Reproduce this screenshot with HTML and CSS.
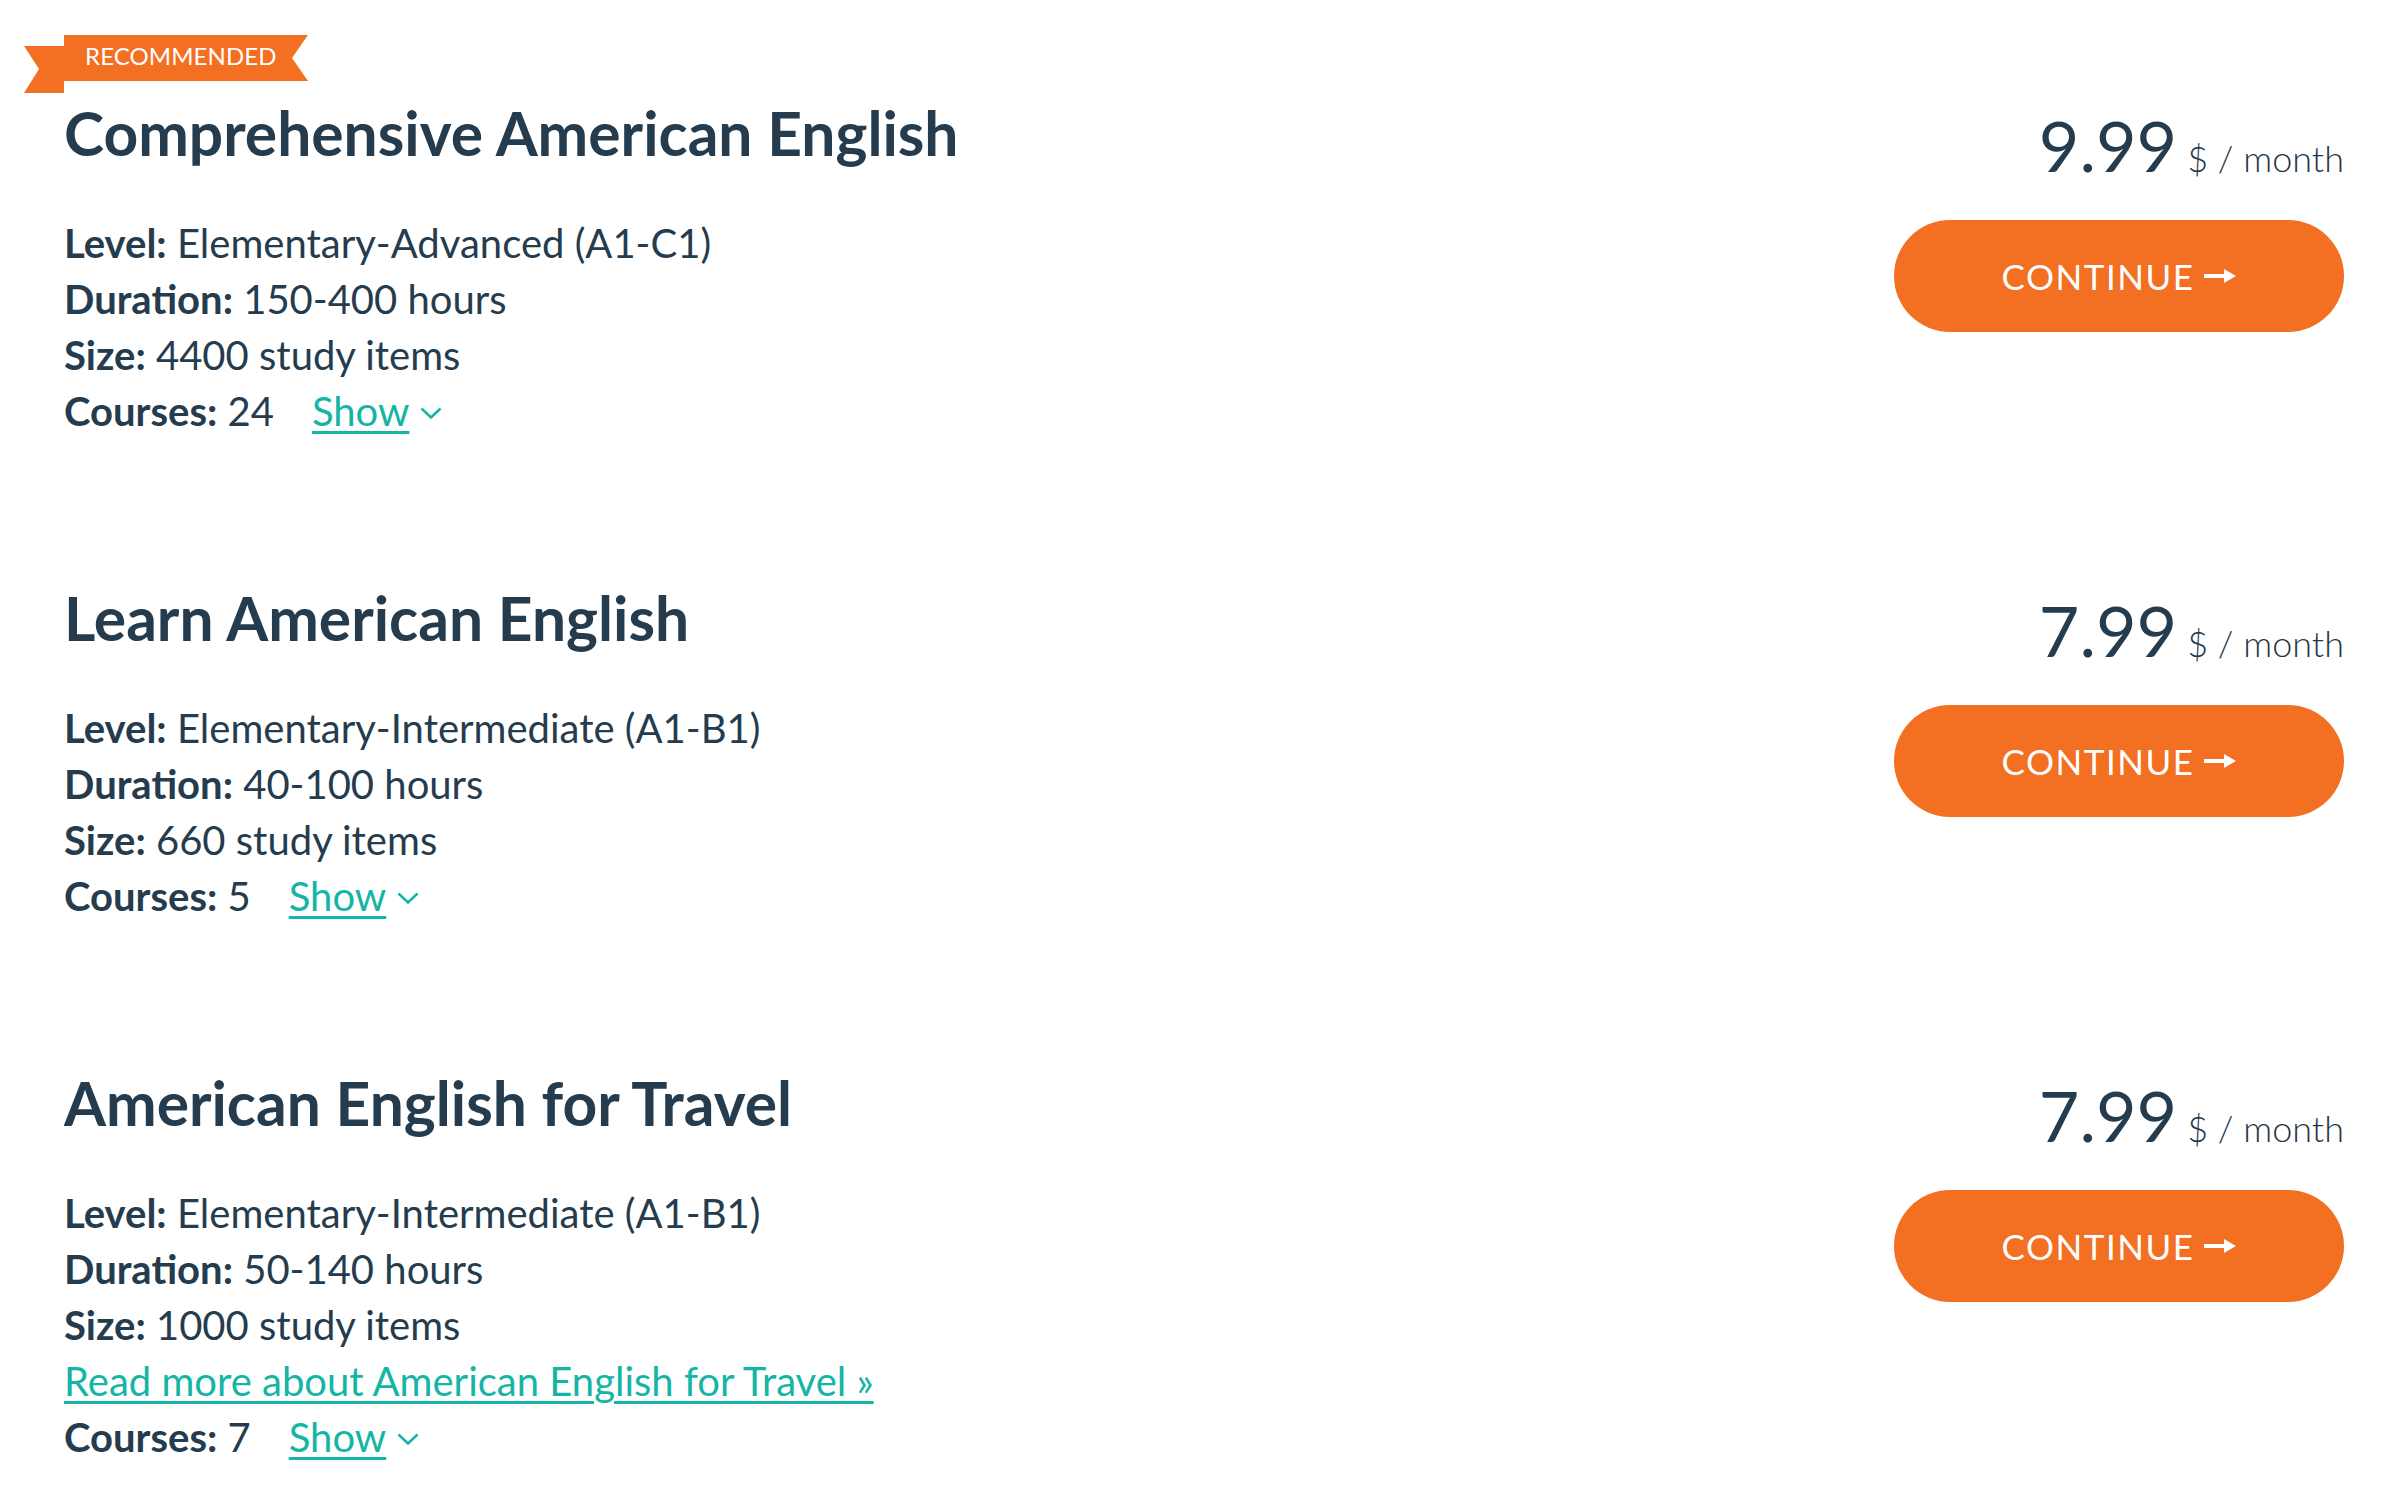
FILE: index.html
```html
<!DOCTYPE html>
<html lang="en">
<head>
<meta charset="utf-8">
<title>Plans</title>
<link rel="stylesheet" href="styles.css">
</head>
<body>
<main class="plans">
  <section class="plan">
    <div class="plan-info">
      <div class="badge">
        <svg class="badge-shape" width="284" height="58" viewBox="0 0 284 58" aria-hidden="true">
          <polygon points="0,11 40,11 40,58 0,58 15,34" fill="#f36f21"/>
          <polygon points="40,0 284,0 268,23 284,46 40,46" fill="#f36f21"/>
        </svg>
        <span class="badge-text">RECOMMENDED</span>
      </div>
      <h2 class="plan-title">Comprehensive American English</h2>
      <ul class="plan-details">
        <li><b>Level:</b> Elementary-Advanced (A1-C1)</li>
        <li><b>Duration:</b> 150-400 hours</li>
        <li><b>Size:</b> 4400 study items</li>
        <li><b>Courses:</b> 24<a class="show" href="#">Show<svg class="chev" width="22" height="12" viewBox="0 0 22 12"><polyline points="1.5,1.5 11,10.5 20.5,1.5"/></svg></a></li>
      </ul>
    </div>
    <div class="plan-buy">
      <div class="price"><span class="amount">9.99</span><span class="unit">$ / month</span></div>
      <a class="btn" href="#">CONTINUE<svg class="arrow" width="32" height="16" viewBox="0 0 32 16"><line x1="0" y1="8" x2="22" y2="8"/><polygon points="20,1 32,8 20,15"/></svg></a>
    </div>
  </section>

  <section class="plan">
    <div class="plan-info">
      <h2 class="plan-title">Learn American English</h2>
      <ul class="plan-details">
        <li><b>Level:</b> Elementary-Intermediate (A1-B1)</li>
        <li><b>Duration:</b> 40-100 hours</li>
        <li><b>Size:</b> 660 study items</li>
        <li><b>Courses:</b> 5<a class="show" href="#">Show<svg class="chev" width="22" height="12" viewBox="0 0 22 12"><polyline points="1.5,1.5 11,10.5 20.5,1.5"/></svg></a></li>
      </ul>
    </div>
    <div class="plan-buy">
      <div class="price"><span class="amount">7.99</span><span class="unit">$ / month</span></div>
      <a class="btn" href="#">CONTINUE<svg class="arrow" width="32" height="16" viewBox="0 0 32 16"><line x1="0" y1="8" x2="22" y2="8"/><polygon points="20,1 32,8 20,15"/></svg></a>
    </div>
  </section>

  <section class="plan">
    <div class="plan-info">
      <h2 class="plan-title">American English for Travel</h2>
      <ul class="plan-details">
        <li><b>Level:</b> Elementary-Intermediate (A1-B1)</li>
        <li><b>Duration:</b> 50-140 hours</li>
        <li><b>Size:</b> 1000 study items</li>
        <li><a class="more" href="#">Read more about American English for Travel »</a></li>
        <li><b>Courses:</b> 7<a class="show" href="#">Show<svg class="chev" width="22" height="12" viewBox="0 0 22 12"><polyline points="1.5,1.5 11,10.5 20.5,1.5"/></svg></a></li>
      </ul>
    </div>
    <div class="plan-buy">
      <div class="price"><span class="amount">7.99</span><span class="unit">$ / month</span></div>
      <a class="btn" href="#">CONTINUE<svg class="arrow" width="32" height="16" viewBox="0 0 32 16"><line x1="0" y1="8" x2="22" y2="8"/><polygon points="20,1 32,8 20,15"/></svg></a>
    </div>
  </section>
</main>
</body>
</html>
```
FILE: styles.css
```css
* { box-sizing: border-box; }

html, body {
  margin: 0;
  padding: 0;
  background: #ffffff;
}

body {
  font-family: Lato, "Open Sans", "Liberation Sans", sans-serif;
  color: #253c4e;
}

.plans {
  display: flex;
  flex-direction: column;
  gap: 144px;
  padding: 98px 44px 0 64px;
}

.plan {
  display: flex;
  justify-content: space-between;
  align-items: flex-start;
}

.plan-info {
  position: relative;
}

.badge {
  position: absolute;
  left: -40px;
  top: -63px;
  width: 284px;
  height: 58px;
  padding-left: 61px;
}

.badge-shape {
  position: absolute;
  left: 0;
  top: 0;
}

.badge-text {
  position: relative;
  display: block;
  font-size: 24px;
  line-height: 42px;
  color: #ffffff;
  letter-spacing: 0.1px;
}

.plan-title {
  margin: 0;
  font-size: 60.5px;
  line-height: 70px;
  font-weight: 700;
  color: #253c4e;
}

.plan-details {
  list-style: none;
  margin: 47px 0 0;
  padding: 0;
  font-size: 40px;
  line-height: 56px;
}

.plan-details li {
  display: flex;
  align-items: baseline;
  white-space: pre;
}

.plan-details b {
  font-weight: 700;
}

.show {
  display: inline-flex;
  align-items: center;
  margin-left: 38px;
  color: #15b5a5;
  text-decoration: underline;
  text-decoration-thickness: 3px;
  text-underline-offset: 5px;
}

.chev {
  margin-left: 11px;
  fill: none;
  stroke: #15b5a5;
  stroke-width: 2.5;
  position: relative;
  top: 2px;
}

.more {
  color: #15b5a5;
  text-decoration: underline;
  text-decoration-thickness: 3px;
  text-underline-offset: 5px;
}

.plan-buy {
  display: flex;
  flex-direction: column;
  align-items: flex-end;
  padding-top: 12px;
}

.price {
  display: flex;
  align-items: baseline;
  gap: 10px;
  line-height: 70px;
}

.amount {
  font-size: 70px;
  font-weight: 400;
  color: #253c4e;
}

.unit {
  font-size: 36px;
  font-weight: 300;
  color: #1f3646;
}

.btn {
  margin-top: 27px;
  width: 450px;
  height: 112px;
  border-radius: 56px;
  background: #f36f21;
  color: #ffffff;
  display: flex;
  align-items: center;
  justify-content: center;
  gap: 10px;
  font-size: 35px;
  letter-spacing: 1.5px;
  text-decoration: none;
}

.arrow line {
  stroke: #ffffff;
  stroke-width: 4;
}

.arrow polygon {
  fill: #ffffff;
}
```
